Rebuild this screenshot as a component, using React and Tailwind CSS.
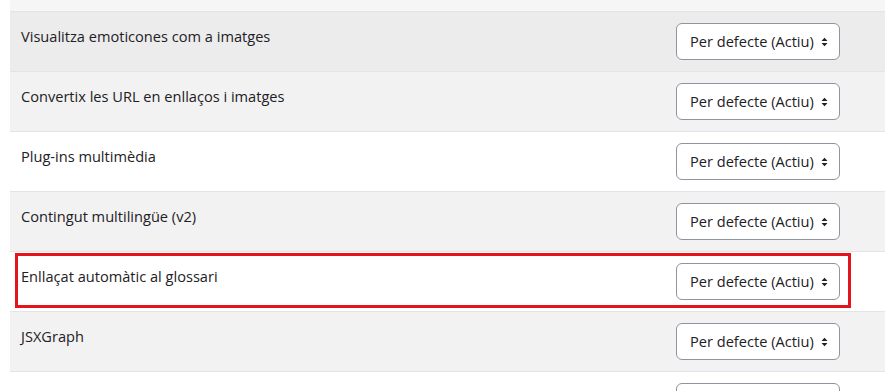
import React from 'react';

const rows = [
  { label: 'Visualitza emoticones com a imatges', bg: 'bg-[#ececec]' },
  { label: 'Convertix les URL en enllaços i imatges', bg: 'bg-[#f2f2f2]' },
  { label: 'Plug-ins multimèdia', bg: 'bg-white' },
  { label: 'Contingut multilingüe (v2)', bg: 'bg-[#f2f2f2]' },
  { label: 'Enllaçat automàtic al glossari', bg: 'bg-white', marked: true },
  { label: 'JSXGraph', bg: 'bg-[#f2f2f2]' },
  { label: 'Shortcodes', bg: 'bg-white' },
];

function SortArrows() {
  return (
    <svg width="7" height="10" viewBox="0 0 7 10">
      <path d="M0.5 4L3.5 0.8L6.5 4Z" fill="#1d2125" />
      <path d="M0.5 6L3.5 9.2L6.5 6Z" fill="#1d2125" />
    </svg>
  );
}

function FilterRow({ label, bg, marked }) {
  return (
    <div className={`relative flex h-[60px] border-t border-[#e2e4e7] ${bg}`}>
      <div className="flex-1 pl-[11px] pt-3 text-[14.6px] leading-6 text-[#1d2125]">{label}</div>
      <div className="w-[209px] pt-[11px]">
        <div className="flex h-[37px] w-[164px] items-center justify-between rounded-[6px] border border-[#8f959e] bg-white pl-[13px] pr-[11px] text-[14.6px] text-[#1d2125]">
          <span>Per defecte (Actiu)</span>
          <SortArrows />
        </div>
      </div>
      {marked && (
        <div className="pointer-events-none absolute left-[5px] top-[1px] h-[55px] w-[836px] border-[3px] border-[#e3141c]" />
      )}
    </div>
  );
}

export default function App() {
  return (
    <div
      className="h-[391px] w-[885px] overflow-hidden bg-white pl-[10px]"
      style={{ fontFamily: '"Open Sans", "Noto Sans", sans-serif' }}
    >
      <div className="h-[11px] bg-[#f6f6f6]" />
      {rows.map((r) => (
        <FilterRow key={r.label} {...r} />
      ))}
    </div>
  );
}
